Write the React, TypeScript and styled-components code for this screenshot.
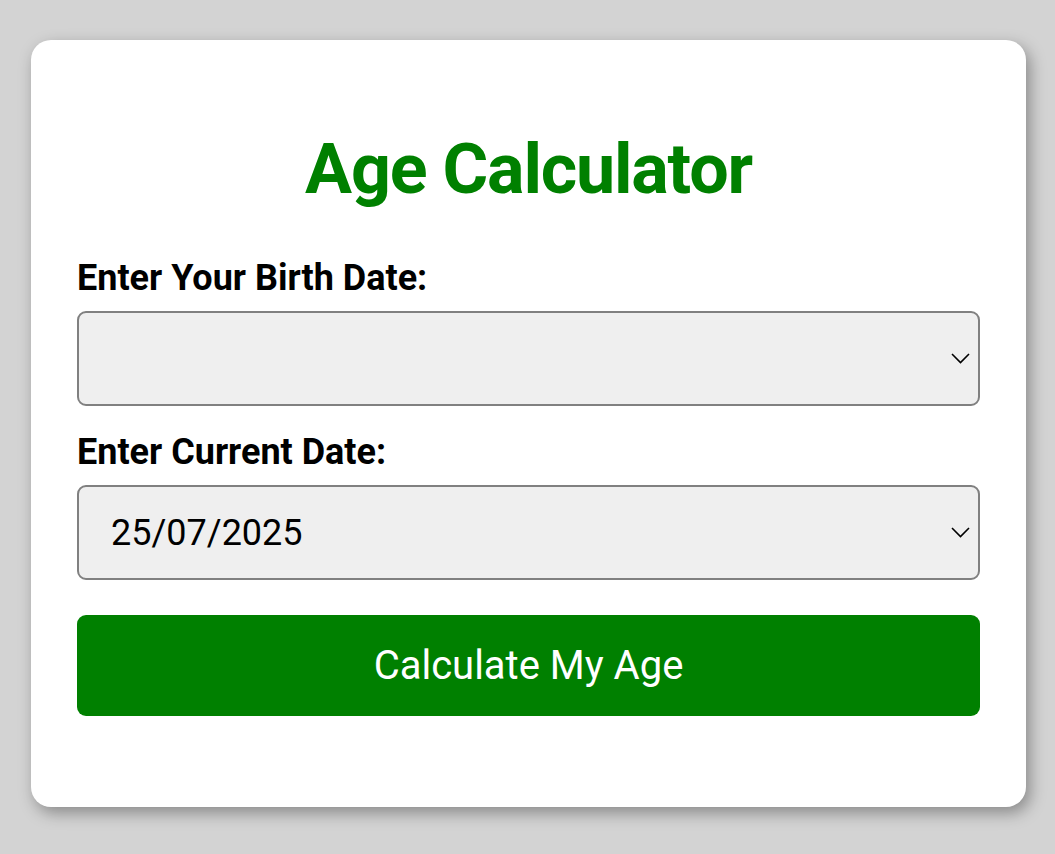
import React from "react";
import styled, { createGlobalStyle } from "styled-components";

const GlobalStyle = createGlobalStyle`
  html, body {
    margin: 0;
    padding: 0;
    background: #d3d3d3;
    font-family: Roboto, "Liberation Sans", Arial, sans-serif;
  }
  * { box-sizing: border-box; }
`;

const Page = styled.div`
  min-height: 854px;
  padding: 40px 29px 0 31px;
`;

const Card = styled.div`
  width: 995px;
  height: 767px;
  background: #ffffff;
  border-radius: 20px;
  box-shadow: 4px 6px 16px rgba(0, 0, 0, 0.35);
  padding: 88px 46px 0 46px;
  display: flex;
  flex-direction: column;
`;

const Title = styled.h1`
  margin: 0 0 47px 0;
  font-size: 70px;
  line-height: 82px;
  font-weight: 700;
  letter-spacing: -1.2px;
  color: #008000;
  text-align: center;
`;

const Label = styled.label<{ $gapTop?: number }>`
  display: block;
  margin: ${(p) => p.$gapTop ?? 0}px 0 12px 0;
  font-size: 36px;
  line-height: 42px;
  font-weight: 700;
  color: #000;
`;

const Field = styled.div`
  height: 95px;
  flex: none;
  border: 2px solid #808080;
  border-radius: 9px;
  background: #efefef;
  display: flex;
  align-items: center;
  justify-content: space-between;
  padding: 0 8px 0 32px;
`;

const FieldText = styled.span`
  font-size: 36px;
  color: #000;
`;

const Chevron = styled.svg`
  width: 19px;
  height: 11px;
  flex: none;
`;

const Button = styled.button`
  margin-top: 35px;
  height: 101px;
  flex: none;
  width: 100%;
  border: none;
  border-radius: 9px;
  background: #008000;
  color: #fff;
  font-family: inherit;
  font-size: 40px;
  font-weight: 400;
  cursor: pointer;
`;

const DateField: React.FC<{ value?: string }> = ({ value }) => (
  <Field>
    <FieldText>{value ?? ""}</FieldText>
    <Chevron viewBox="0 0 19 11" fill="none">
      <path d="M1 1 L9.5 9.5 L18 1" stroke="#000" strokeWidth="1.6" />
    </Chevron>
  </Field>
);

export default function App() {
  return (
    <>
      <GlobalStyle />
      <Page>
        <Card>
          <Title>Age Calculator</Title>
          <Label>Enter Your Birth Date:</Label>
          <DateField />
          <Label $gapTop={25}>Enter Current Date:</Label>
          <DateField value="25/07/2025" />
          <Button>Calculate My Age</Button>
        </Card>
      </Page>
    </>
  );
}
